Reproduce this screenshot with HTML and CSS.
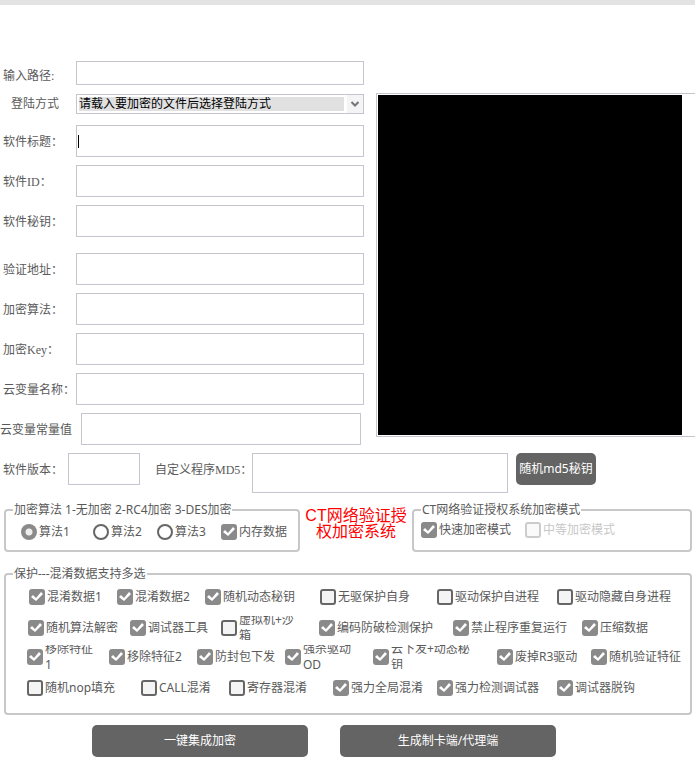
FILE: index.html
```html
<!DOCTYPE html>
<html lang="zh-CN">
<head>
<meta charset="utf-8">
<meta name="viewport" content="width=device-width, initial-scale=1">
<title>CT网络验证授权加密系统</title>
<link rel="stylesheet" href="styles.css">
</head>
<body>
<header class="titlebar"></header>
<main class="app">
  <section class="top">
    <div class="fields">
      <div class="row path"><label for="path">输入路径:</label><input class="short" id="path" type="text"></div>
      <div class="row login">
        <label class="indent" for="login">登陆方式</label>
        <div class="combo">
          <select id="login"><option>请载入要加密的文件后选择登陆方式</option></select>
          <svg class="arrow" viewBox="0 0 8 6" aria-hidden="true"><path d="M0.5 1 L4 4.5 L7.5 1"/></svg>
        </div>
      </div>
      <div class="row"><label for="title">软件标题：</label><input class="active" id="title" type="text"></div>
      <div class="row"><label for="sid">软件ID：</label><input id="sid" type="text"></div>
      <div class="row"><label for="secret">软件秘钥：</label><input id="secret" type="text"></div>
      <div class="row second"><label for="addr">验证地址：</label><input id="addr" type="text"></div>
      <div class="row"><label for="algo">加密算法：</label><input id="algo" type="text"></div>
      <div class="row"><label for="key">加密Key：</label><input id="key" type="text"></div>
      <div class="row"><label for="varname">云变量名称：</label><input id="varname" type="text"></div>
      <div class="row const"><label for="varvalue">云变量常量值</label><input id="varvalue" type="text"></div>
    </div>
    <div class="preview"><div class="screen"></div></div>
  </section>

  <section class="version">
    <label for="ver">软件版本：</label><input class="ver" id="ver" type="text">
    <label class="md5-label" for="md5">自定义程序MD5：</label><input class="md5" id="md5" type="text">
    <button type="button">随机md5秘钥</button>
  </section>

  <section class="modes">
    <fieldset class="algorithms">
      <legend>加密算法 1-无加密 2-RC4加密 3-DES加密</legend>
      <div class="options">
        <label class="opt"><input type="radio" name="alg" checked><span>算法1</span></label>
        <label class="opt"><input type="radio" name="alg"><span>算法2</span></label>
        <label class="opt"><input type="radio" name="alg"><span>算法3</span></label>
        <label class="opt"><input type="checkbox" checked><span>内存数据</span></label>
      </div>
    </fieldset>
    <h1>CT网络验证授<br>权加密系统</h1>
    <fieldset class="system">
      <legend>CT网络验证授权系统加密模式</legend>
      <div class="options">
        <label class="opt"><input type="checkbox" checked><span>快速加密模式</span></label>
        <label class="opt"><input type="checkbox" disabled><span>中等加密模式</span></label>
      </div>
    </fieldset>
  </section>

  <fieldset class="protect">
    <legend>保护---混淆数据支持多选</legend>
    <div class="lines">
      <div class="line l1">
        <label class="opt"><input type="checkbox" checked><span>混淆数据1</span></label>
        <label class="opt"><input type="checkbox" checked><span>混淆数据2</span></label>
        <label class="opt"><input type="checkbox" checked><span>随机动态秘钥</span></label>
        <label class="opt"><input type="checkbox"><span>无驱保护自身</span></label>
        <label class="opt"><input type="checkbox"><span>驱动保护自进程</span></label>
        <label class="opt"><input type="checkbox"><span>驱动隐藏自身进程</span></label>
      </div>
      <div class="line l2">
        <label class="opt"><input type="checkbox" checked><span>随机算法解密</span></label>
        <label class="opt"><input type="checkbox" checked><span>调试器工具</span></label>
        <label class="opt"><input type="checkbox"><span>虚拟机+沙<br>箱</span></label>
        <label class="opt"><input type="checkbox" checked><span>编码防破检测保护</span></label>
        <label class="opt"><input type="checkbox" checked><span>禁止程序重复运行</span></label>
        <label class="opt"><input type="checkbox" checked><span>压缩数据</span></label>
      </div>
      <div class="line l3">
        <label class="opt"><input type="checkbox" checked><span>移除特征<br>1</span></label>
        <label class="opt"><input type="checkbox" checked><span>移除特征2</span></label>
        <label class="opt"><input type="checkbox" checked><span>防封包下发</span></label>
        <label class="opt"><input type="checkbox" checked><span>强杀驱动<br>OD</span></label>
        <label class="opt"><input type="checkbox" checked><span>云下发+动态秘<br>钥</span></label>
        <label class="opt"><input type="checkbox" checked><span>废掉R3驱动</span></label>
        <label class="opt"><input type="checkbox" checked><span>随机验证特征</span></label>
      </div>
      <div class="line l4">
        <label class="opt"><input type="checkbox"><span>随机nop填充</span></label>
        <label class="opt"><input type="checkbox"><span>CALL混淆</span></label>
        <label class="opt"><input type="checkbox"><span>寄存器混淆</span></label>
        <label class="opt"><input type="checkbox" checked><span>强力全局混淆</span></label>
        <label class="opt"><input type="checkbox" checked><span>强力检测调试器</span></label>
        <label class="opt"><input type="checkbox" checked><span>调试器脱钩</span></label>
      </div>
    </div>
  </fieldset>

  <footer class="actions">
    <button type="button">一键集成加密</button>
    <button type="button">生成制卡端/代理端</button>
  </footer>
</main>
</body>
</html>
```

FILE: styles.css
```css
* { box-sizing: border-box; }

body {
  margin: 0;
  background: #fff;
  color: #5a5a5a;
  font: 12px/16px "Noto Sans", "Noto Sans CJK SC", sans-serif;
}

input, select, button { margin: 0; font: inherit; }

.titlebar { height: 5px; background: #e3e3e3; }

.app { padding-top: 56px; }

/* connection form and preview */
.top {
  display: grid;
  grid-template-columns: 364fr 319fr;
  gap: 12px;
}

.fields {
  display: flex;
  flex-direction: column;
  gap: 8px;
}

.fields, .version { font-family: "Liberation Serif", "Noto Sans CJK SC", serif; }

.row {
  display: grid;
  grid-template-columns: 76px 1fr;
  align-items: center;
}

.row label { padding: 2px 0 0 3px; white-space: nowrap; }
.row .indent { padding: 0 0 0 11px; }
.path label { padding-top: 6px; }

input[type="text"] {
  display: block;
  width: 100%;
  min-width: 0;
  height: 32px;
  padding: 0 2px;
  border: 1px solid #c5c5cf;
  border-radius: 0;
  background: #fff;
  outline: 0;
}

input[type="text"].short { height: 24px; }

input[type="text"].active {
  background: linear-gradient(#000, #000) 1px 9px / 1px 13px no-repeat #fff;
}

.login { margin: 1px 0 3px; }
.second { margin-top: 8px; }

.const { grid-template-columns: 81px 1fr; padding-right: 3px; }
.const label { padding-left: 0; }

.combo {
  position: relative;
  height: 20px;
  padding: 2px 19px 2px 2px;
  border: 1px solid #c5c5cf;
  background: linear-gradient(#f4f4f4, #f4f4f4) right / 16px 100% no-repeat;
}

.combo select {
  display: block;
  width: 100%;
  height: 14px;
  padding: 0;
  border: 0;
  border-radius: 0;
  appearance: none;
  background: #e1e1e1;
  color: #000;
  line-height: 14px;
}

.arrow {
  position: absolute;
  top: 6px;
  right: 4px;
  width: 8px;
  height: 6px;
  fill: none;
  stroke: #777;
  stroke-width: 2;
  pointer-events: none;
}

.preview {
  margin: 32px 0 8px;
  padding: 1px 13px 1px 1px;
  border: 1px solid #c5c5cf;
  border-right: 0;
}

.screen { height: 100%; background: #000; }

/* version and md5 */
.version {
  display: grid;
  grid-template-columns: 68px 72px 112px 256px 80px;
  align-items: start;
  margin-top: 8px;
}

.version label { padding: 9px 0 0 3px; white-space: nowrap; }
.version .md5-label { padding-left: 15px; }
.version input[type="text"].md5 { height: 40px; }
.version button { margin: 0 -8px 0 8px; }

button {
  height: 32px;
  padding: 0;
  border: 0;
  border-radius: 5px;
  background: #646464;
  color: #fff;
  font: 12px/16px "Noto Sans", "Noto Sans CJK SC", sans-serif;
  white-space: nowrap;
}

/* option groups */
fieldset {
  min-width: 0;
  margin: 0;
  padding: 0;
  border: 2px solid #c8c8c8;
  border-radius: 4px;
}

legend {
  margin-left: 7px;
  padding: 0 1px;
  line-height: 16px;
  white-space: nowrap;
}

.modes {
  display: grid;
  grid-template-columns: 296fr 112fr 280fr;
  margin: 9px 3px 0 4px;
}

.modes .options { display: grid; height: 32px; }
.algorithms .options {
  grid-template-columns: 72fr 64fr 64fr 77fr;
  padding: 2px 0 6px 15px;
}
.system .options {
  grid-template-columns: 104fr 165fr;
  padding: 0 0 8px 7px;
}

h1 {
  margin: 6px 0 0;
  color: #f00;
  font: 16px/16px "Liberation Sans", "Noto Sans CJK SC", sans-serif;
  text-align: center;
  white-space: nowrap;
}

.opt {
  display: flex;
  align-items: center;
  gap: 2px;
  height: 24px;
  overflow: hidden;
  white-space: nowrap;
}

.opt:has(:disabled) { color: #c8c8c8; }

.opt input {
  flex: none;
  width: 16px;
  height: 16px;
  border: 2px solid #666;
  border-radius: 3px;
  appearance: none;
  background: #f4f4f4;
}

.opt input:disabled { border-color: #ccc; background: #fafafa; }
.opt input:checked { border: 0; background: #8a8a8a; }

.opt input[type="checkbox"]:checked::before {
  content: "";
  display: block;
  width: 16px;
  height: 16px;
  background: #fff;
  clip-path: polygon(2px 8px, 4px 6px, 7px 9px, 12px 3px, 14px 5px, 7px 12px);
}

.opt input[type="radio"] { border-radius: 50%; background: #fff; }

.opt input[type="radio"]:checked {
  background: radial-gradient(circle, #eee 3px, #8a8a8a 4px);
}

.protect { margin: 14px 3px 0 4px; }

.lines {
  display: grid;
  grid-template-rows: 31px 29px 31px 24px;
  padding: 3px 0 13px;
}

.line { display: grid; }
.l1 { grid-template-columns: 88fr 88fr 115fr 117fr 120fr 133fr; padding-left: 23px; }
.l2 { grid-template-columns: 102fr 91fr 98fr 134fr 129fr 108fr; padding-left: 22px; }
.l3 { grid-template-columns: 82fr 88fr 88fr 88fr 124fr 94fr 99fr; padding-left: 21px; }
.l4 { grid-template-columns: 114fr 88fr 104fr 104fr 120fr 133fr; padding-left: 21px; }

.actions {
  display: grid;
  grid-template-columns: 216fr 216fr;
  gap: 32px;
  margin: 10px 20% 0 92px;
}
```
